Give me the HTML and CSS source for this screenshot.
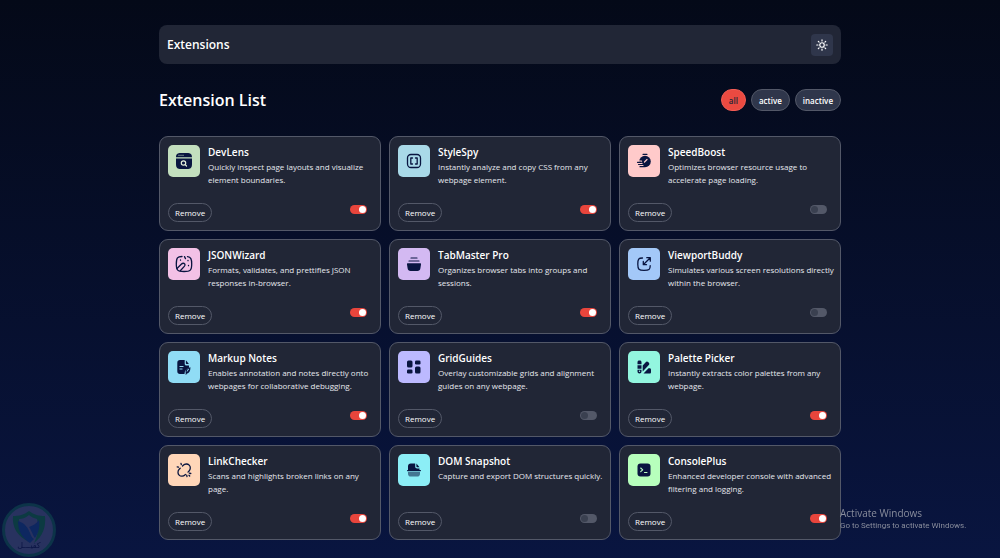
FILE: index.html
```html
<!DOCTYPE html>
<html lang="en">
<head>
    <meta charset="UTF-8">
    <meta name="viewport" content="width=device-width, initial-scale=1.0">
    <title>Extensions</title>
    <link rel="stylesheet" href="styles.css">
</head>
<body>
    <div class="container">
        <header class="header">
            <h1>Extensions</h1>
            <button class="theme-btn" type="button" aria-label="Toggle theme">
                <svg width="12" height="12" viewBox="0 0 24 24" fill="none" stroke="#fff" stroke-width="2.4" stroke-linecap="round">
                    <circle cx="12" cy="12" r="4.5"/>
                    <path d="M12 1.5v2.5M12 20v2.5M1.5 12H4M20 12h2.5M4.6 4.6l1.6 1.6M17.8 17.8l1.6 1.6M4.6 19.4l1.6-1.6M17.8 6.2l1.6-1.6"/>
                </svg>
            </button>
        </header>

        <div class="list-header">
            <h2>Extension List</h2>
            <div class="filters">
                <button class="filter active" type="button">all</button>
                <button class="filter" type="button">active</button>
                <button class="filter" type="button">inactive</button>
            </div>
        </div>

        <main class="grid">
            <article class="card">
                <div class="info">
                    <div class="icon green">
                        <svg viewBox="0 0 32 32">
                            <path fill="#091540" d="M8 13.5h16V19c0 4-1.500 5-5 5h-6c-3.500 0-5-1-5-5zM8 12.300C8 9 9.500 8 13 8h6c3.500 0 5 1 5 4.300z"/>
                            <path stroke="#c3dfbe" fill="none" d="M10.500 10.300h1M12.500 10.300h1M14.500 10.300h1"/>
                            <g fill="none" stroke="#e5f0dd" stroke-width="1.200" stroke-linecap="round"><circle cx="15.500" cy="18" r="2.200"/><path d="M17.200 19.700l1.300 1.300"/></g>
                        </svg>
                    </div>
                    <div class="text">
                        <h3>DevLens</h3>
                        <p>Quickly inspect page layouts and visualize element boundaries.</p>
                    </div>
                </div>
                <div class="actions">
                    <button class="remove" type="button">Remove</button>
                    <input class="toggle" type="checkbox" aria-label="DevLens" checked>
                </div>
            </article>

            <article class="card">
                <div class="info">
                    <div class="icon blue">
                        <svg viewBox="0 0 32 32" fill="none" stroke="#091540" stroke-width="1.300" stroke-linecap="round" stroke-linejoin="round">
                            <rect x="9.500" y="9.500" width="13" height="13" rx="3.500"/>
                            <path d="M14.500 13h-1.700v6h1.700M17.500 13h1.700v6h-1.700"/>
                        </svg>
                    </div>
                    <div class="text">
                        <h3>StyleSpy</h3>
                        <p>Instantly analyze and copy CSS from any webpage element.</p>
                    </div>
                </div>
                <div class="actions">
                    <button class="remove" type="button">Remove</button>
                    <input class="toggle" type="checkbox" aria-label="StyleSpy" checked>
                </div>
            </article>

            <article class="card">
                <div class="info">
                    <div class="icon pink">
                        <svg viewBox="0 0 32 32" stroke-linecap="round">
                            <circle cx="17" cy="16.500" r="5.800" fill="#091540"/>
                            <path fill="none" stroke="#fdc8c8" stroke-width="1.200" d="M16.500 17l2.500-2.500M9 16.200h4.500M9.500 18.400h4.500M11 20.600h4"/>
                            <path fill="none" stroke="#091540" stroke-width="1.200" d="M15 9.300h4M9.500 17.300h3.500M10.500 19.500h4M12 21.700h4"/>
                        </svg>
                    </div>
                    <div class="text">
                        <h3>SpeedBoost</h3>
                        <p>Optimizes browser resource usage to accelerate page loading.</p>
                    </div>
                </div>
                <div class="actions">
                    <button class="remove" type="button">Remove</button>
                    <input class="toggle" type="checkbox" aria-label="SpeedBoost">
                </div>
            </article>

            <article class="card">
                <div class="info">
                    <div class="icon rose">
                        <svg viewBox="0 0 32 32" fill="none" stroke="#091540" stroke-width="1.300" stroke-linecap="round">
                            <path d="M14 8.500c-4.500 0-5.700 1.200-5.700 7.500s1.200 7.500 7.700 7.500 7.700-1.200 7.700-7.500c0-5-.8-7-4.200-7.400"/>
                            <path d="M9 20.500l4.500-4.500c1-1 2.500-1 3.200 0 .7.900.3 1.700-.4 2.400l-4 4.300M16.500 8.600l1 2M12.500 12v.2M20 12.500v.2M20.500 17.500v.2"/>
                        </svg>
                    </div>
                    <div class="text">
                        <h3>JSONWizard</h3>
                        <p>Formats, validates, and prettifies JSON responses in-browser.</p>
                    </div>
                </div>
                <div class="actions">
                    <button class="remove" type="button">Remove</button>
                    <input class="toggle" type="checkbox" aria-label="JSONWizard" checked>
                </div>
            </article>

            <article class="card">
                <div class="info">
                    <div class="icon purple">
                        <svg viewBox="0 0 32 32">
                            <path fill="#091540" d="M10 15.300h12c.8 0 1.100.5 1 1.200l-.6 3.800c-.3 1.900-1.200 2.700-3 2.700h-6.800c-1.800 0-2.700-.8-3-2.700L9 16.500c-.1-.7.2-1.200 1-1.200z"/>
                            <path fill="none" stroke="#091540" stroke-width="1.200" stroke-linecap="round" d="M11 13h10M13 10h6"/>
                        </svg>
                    </div>
                    <div class="text">
                        <h3>TabMaster Pro</h3>
                        <p>Organizes browser tabs into groups and sessions.</p>
                    </div>
                </div>
                <div class="actions">
                    <button class="remove" type="button">Remove</button>
                    <input class="toggle" type="checkbox" aria-label="TabMaster Pro" checked>
                </div>
            </article>

            <article class="card">
                <div class="info">
                    <div class="icon sky">
                        <svg viewBox="0 0 32 32" fill="none" stroke="#091540" stroke-width="1.300" stroke-linecap="round" stroke-linejoin="round">
                            <path d="M14.500 10c-4 0-4.700 1.200-4.700 6.200s1 6.200 6.200 6.200 6.200-1 6.200-4.700"/>
                            <path d="M15.500 16.500L22 10M18.800 9.700h3.500v3.500M15.300 13.500v3.200h3.200"/>
                        </svg>
                    </div>
                    <div class="text">
                        <h3>ViewportBuddy</h3>
                        <p>Simulates various screen resolutions directly within the browser.</p>
                    </div>
                </div>
                <div class="actions">
                    <button class="remove" type="button">Remove</button>
                    <input class="toggle" type="checkbox" aria-label="ViewportBuddy">
                </div>
            </article>

            <article class="card">
                <div class="info">
                    <div class="icon cyan">
                        <svg viewBox="0 0 32 32">
                            <path fill="#091540" d="M12 9h4.700v3.500c0 1.500.5 2 2 2H21v2.200c-2.500.8-4.500 3-4.500 6.300H12c-1.700 0-2.700-1-2.700-2.700v-8.600C9.300 10 10.300 9 12 9zM17.900 9.300l3 3.800h-2c-.7 0-1-.3-1-1z"/>
                            <path stroke="#93d8ef" d="M11.500 15.500h4M11.500 18h3"/>
                            <path fill="none" stroke="#091540" stroke-width="1.200" stroke-linecap="round" d="M18 23l3.500-4.500M18.200 21.500c-.3-2.500 1-4.300 3.600-4.500 0 3-.8 4.500-3.300 5.200"/>
                        </svg>
                    </div>
                    <div class="text">
                        <h3>Markup Notes</h3>
                        <p>Enables annotation and notes directly onto webpages for collaborative debugging.</p>
                    </div>
                </div>
                <div class="actions">
                    <button class="remove" type="button">Remove</button>
                    <input class="toggle" type="checkbox" aria-label="Markup Notes" checked>
                </div>
            </article>

            <article class="card">
                <div class="info">
                    <div class="icon violet">
                        <svg viewBox="0 0 32 32" fill="#091540">
                            <rect x="9" y="9.500" width="5.500" height="7" rx="1.500"/>
                            <rect x="17" y="9.500" width="5.500" height="4" rx="1.300"/>
                            <rect x="9" y="18.500" width="5.500" height="4" rx="1.300"/>
                            <rect x="17" y="15.500" width="5.500" height="7" rx="1.500"/>
                        </svg>
                    </div>
                    <div class="text">
                        <h3>GridGuides</h3>
                        <p>Overlay customizable grids and alignment guides on any webpage.</p>
                    </div>
                </div>
                <div class="actions">
                    <button class="remove" type="button">Remove</button>
                    <input class="toggle" type="checkbox" aria-label="GridGuides">
                </div>
            </article>

            <article class="card">
                <div class="info">
                    <div class="icon mint">
                        <svg viewBox="0 0 32 32" fill="#091540">
                            <path d="M9.500 13.200v-2c0-1 .7-1.700 1.700-1.700h.6c1 0 1.700.7 1.700 1.700v2zM9.500 14.200h4v3.500h-4zM9.500 18.700h4v1.800c0 1.200-.8 2-2 2s-2-.8-2-2z"/>
                            <path d="M14.700 14.500l3-3.300c.7-.8 1.700-.8 2.500-.1l.6.600c.7.700.7 1.700 0 2.400l-6.100 6.400zM15.500 22.500l5-5.300h1c1 0 1.500.6 1.500 1.500V21c0 1-.5 1.500-1.500 1.500z"/>
                            <circle cx="11.500" cy="20.300" r=".7" fill="#93f6df"/>
                        </svg>
                    </div>
                    <div class="text">
                        <h3>Palette Picker</h3>
                        <p>Instantly extracts color palettes from any webpage.</p>
                    </div>
                </div>
                <div class="actions">
                    <button class="remove" type="button">Remove</button>
                    <input class="toggle" type="checkbox" aria-label="Palette Picker" checked>
                </div>
            </article>

            <article class="card">
                <div class="info">
                    <div class="icon peach">
                        <svg viewBox="0 0 32 32" fill="none" stroke="#091540" stroke-width="1.300" stroke-linecap="round">
                            <path d="M14.500 12l.8-.8c1.500-1.500 4.300-1.700 5.900-.1s1.400 4.400-.1 5.900l-1.100 1.100M12.200 14.300l-1 1c-1.500 1.500-1.700 4.200-.1 5.800s4.300 1.400 5.800-.1l.6-.6"/>
                            <path d="M13 9.300l.3 1.300M9.200 12.800l1.300.3M19 22.500l-.3-1.300M22.800 19.500l-1.500-.4M21.700 22l-.7-.8"/>
                        </svg>
                    </div>
                    <div class="text">
                        <h3>LinkChecker</h3>
                        <p>Scans and highlights broken links on any page.</p>
                    </div>
                </div>
                <div class="actions">
                    <button class="remove" type="button">Remove</button>
                    <input class="toggle" type="checkbox" aria-label="LinkChecker" checked>
                </div>
            </article>

            <article class="card">
                <div class="info">
                    <div class="icon aqua">
                        <svg viewBox="0 0 32 32" fill="#091540">
                            <path d="M12.800 9.500h4.400v2.700c0 1.600.6 2.200 2.200 2.200h2.100v1.800H10v-3.900c0-1.700 1-2.800 2.800-2.800zM18.400 9.600l3.100 3.700h-2c-.8 0-1.100-.3-1.100-1.100z"/>
                            <rect x="9" y="16" width="14" height="1.200" rx=".6"/>
                            <path opacity=".55" d="M10 18h12v1.700c0 1.900-1 2.800-2.800 2.800h-6.400c-1.800 0-2.800-.9-2.800-2.800z"/>
                        </svg>
                    </div>
                    <div class="text">
                        <h3>DOM Snapshot</h3>
                        <p>Capture and export DOM structures quickly.</p>
                    </div>
                </div>
                <div class="actions">
                    <button class="remove" type="button">Remove</button>
                    <input class="toggle" type="checkbox" aria-label="DOM Snapshot">
                </div>
            </article>

            <article class="card">
                <div class="info">
                    <div class="icon lime">
                        <svg viewBox="0 0 32 32">
                            <rect x="9.500" y="9.500" width="13" height="13" rx="3" fill="#091540"/>
                            <path fill="none" stroke="#bbffc0" stroke-width="1.100" stroke-linecap="round" stroke-linejoin="round" d="M12.700 14l2 1.800-2 1.800M16.500 18.500h2.500"/>
                        </svg>
                    </div>
                    <div class="text">
                        <h3>ConsolePlus</h3>
                        <p>Enhanced developer console with advanced filtering and logging.</p>
                    </div>
                </div>
                <div class="actions">
                    <button class="remove" type="button">Remove</button>
                    <input class="toggle" type="checkbox" aria-label="ConsolePlus" checked>
                </div>
            </article>
        </main>
    </div>

    <div class="seal">
        <svg width="56" height="56" viewBox="0 0 56 56">
            <circle cx="28" cy="28" r="25.500" fill="#28325f" stroke="#0c3348" stroke-width="3"/>
            <path fill="#0c3a42" d="M28 9c5 4 10 5 16 5 1 11-2 20-11 27 4-8 5-16 3-24-3-1-6-2-8-4-4 3-7 4-10 4 0 5 1 9 3 13 2 4 5 7 7 10C16 34 11 25 12 14c6 0 11-1 16-5z"/>
            <path fill="#0d2760" d="M17 19c7 2 10 7 12 12 1 3 2 5 4 6l-4 4c-8-5-12-12-12-22z"/>
            <path fill="#0d2760" d="M38 18c1 6 0 12-4 18-2-2-3-7-6-11 3-1 7-3 10-7z"/>
        </svg>
        <span lang="ar">كفيـــل</span>
    </div>

    <div class="activate">
        <strong>Activate Windows</strong>
        <span>Go to Settings to activate Windows.</span>
    </div>
</body>
</html>
```
FILE: styles.css
```css
* {
    box-sizing: border-box;
    margin: 0;
    padding: 0;
}

body {
    min-height: 100vh;
    background: linear-gradient(180deg, #040918, #091540) no-repeat fixed;
    color: #fff;
    font-family: "Segoe UI", "Open Sans", sans-serif;
}

button {
    font-family: inherit;
    color: inherit;
    cursor: pointer;
}

.container {
    max-width: 698px;
    margin: 0 auto;
    padding: 25px 8px 16px;
}

.header {
    display: flex;
    justify-content: space-between;
    align-items: center;
    min-height: 39px;
    padding: 8px;
    background: #212636;
    border-radius: 8px;
}

.header h1 {
    font-size: 12px;
    font-weight: 600;
}

.theme-btn {
    display: flex;
    justify-content: center;
    align-items: center;
    width: 22px;
    height: 22px;
    background: #2f364b;
    border: none;
    border-radius: 4px;
}

.list-header {
    display: flex;
    justify-content: space-between;
    align-items: center;
    margin: 24px 0;
}

.list-header h2 {
    font-size: 16px;
    line-height: 24px;
    font-weight: 600;
}

.filters {
    display: flex;
    gap: 5px;
}

.filter {
    height: 22px;
    padding: 0 7px;
    background: #2f364b;
    border: 1px solid #535868;
    border-radius: 11px;
    font-size: 8px;
    font-weight: 600;
}

.filter.active {
    background: #ea4a41;
    border-color: #f25c54;
    color: #212636;
}

.grid {
    display: grid;
    grid-template-columns: repeat(3, 1fr);
    gap: 8px;
}

.card {
    display: flex;
    flex-direction: column;
    justify-content: space-between;
    gap: 17px;
    padding: 8px 2px 8px 8px;
    background: #212636;
    border: 1px solid #535868;
    border-radius: 9px;
}

.info {
    display: flex;
    gap: 8px;
}

.icon {
    flex: none;
    width: 32px;
    height: 32px;
    border-radius: 5px;
}

.icon svg {
    display: block;
}

.green { background: #c3dfbe; }
.blue { background: #a9d9e8; }
.pink { background: #ffcaca; }
.rose { background: #f3c1e6; }
.purple { background: #d3b9f2; }
.sky { background: #a3c8f8; }
.cyan { background: #90dcf5; }
.violet { background: #bcb9ff; }
.mint { background: #93f6df; }
.peach { background: #ffd6b8; }
.aqua { background: #8ceef6; }
.lime { background: #b7ffbc; }

.text h3 {
    font-size: 10px;
    line-height: 15px;
    font-weight: 600;
}

.text p {
    color: #e6e8ee;
    font-size: 8px;
    line-height: 13px;
}

.actions {
    display: flex;
    justify-content: space-between;
    align-items: flex-start;
}

.remove {
    height: 19px;
    padding: 0 6px;
    background: transparent;
    border: 1px solid #535868;
    border-radius: 10px;
    font-size: 8px;
    font-weight: 500;
}

.toggle {
    appearance: none;
    display: flex;
    width: 17px;
    height: 9px;
    margin: 2px 11px 0 0;
    padding: 1px;
    background: #535868;
    border-radius: 5px;
    cursor: pointer;
}

.toggle::before {
    content: "";
    width: 7px;
    height: 7px;
    background: #3a4050;
    border-radius: 50%;
}

.toggle:checked {
    justify-content: flex-end;
    background: #e8453c;
}

.toggle:checked::before {
    background: #fff;
}

/* desktop overlays */
.seal {
    position: fixed;
    left: 1px;
    bottom: 0;
    width: 56px;
    height: 56px;
}

.seal span {
    position: absolute;
    left: 0;
    right: 0;
    bottom: 6px;
    color: #0a1444;
    font-family: "DejaVu Sans", sans-serif;
    font-size: 8px;
    line-height: 12px;
    text-align: center;
}

.activate {
    position: fixed;
    left: 840px;
    bottom: 27px;
    display: flex;
    flex-direction: column;
    color: #898d9c;
    white-space: nowrap;
}

.activate strong {
    font-size: 10px;
    line-height: 13px;
    font-weight: 400;
}

.activate span {
    font-family: Roboto, sans-serif;
    font-size: 8px;
    line-height: 11px;
}
```
